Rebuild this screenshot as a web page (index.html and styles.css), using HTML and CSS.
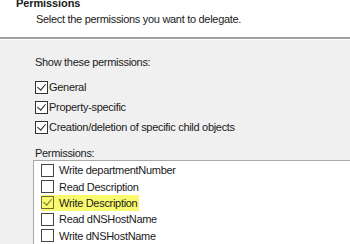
FILE: index.html
```html
<!DOCTYPE html>
<html lang="en">
<head>
    <meta charset="UTF-8">
    <title>Permissions</title>
    <link rel="stylesheet" href="styles.css">
</head>
<body>
    <div class="header">
        <h1>Permissions</h1>
        <p>Select the permissions you want to delegate.</p>
    </div>

    <div class="content">
        <p class="label">Show these permissions:</p>
        <div class="filter">
            <div class="check-row"><span class="box checked"></span>General</div>
            <div class="check-row"><span class="box checked"></span>Property-specific</div>
            <div class="check-row"><span class="box checked"></span>Creation/deletion of specific child objects</div>
        </div>

        <p class="label">Permissions:</p>
        <div class="listbox">
            <div class="item"><span class="box"></span>Write departmentNumber</div>
            <div class="item"><span class="box"></span>Read Description</div>
            <div class="item marked"><span class="box checked"></span>Write Description</div>
            <div class="item"><span class="box"></span>Read dNSHostName</div>
            <div class="item"><span class="box"></span>Write dNSHostName</div>
        </div>
    </div>
</body>
</html>
```

FILE: styles.css
```css
/* Delegation wizard page */
body, h1, p {
    margin: 0;
    padding: 0;
}

body {
    font-family: 'Liberation Sans', Arial, sans-serif;
    font-size: 11px;
    letter-spacing: -0.3px;
    color: #1a1a1a;
    background-color: #f0f0f0;
    width: 350px;
    height: 244px;
    overflow: hidden;
    white-space: nowrap;
}

.header {
    background-color: #ffffff;
    height: 41px;
    border-bottom: 2px solid #a0a0a0;
    box-shadow: 0 1px 0 #ffffff;
}

.header h1 {
    font-size: 11px;
    font-weight: bold;
    letter-spacing: -0.1px;
    line-height: 14px;
    padding-left: 16px;
    margin-top: -4px;
}

.header p {
    padding-left: 36px;
    line-height: 14px;
    margin-top: 2px;
}

.content {
    padding: 16px 0 0 35px;
}

.label {
    line-height: 14px;
}

.filter {
    padding-top: 8px;
    padding-bottom: 9px;
}

.check-row {
    display: flex;
    align-items: center;
    height: 20px;
}

.box {
    width: 11px;
    height: 11px;
    border: 1px solid #333333;
    background-color: #ffffff;
    margin-right: 1px;
    flex-shrink: 0;
    position: relative;
}

.box.checked::after {
    content: "";
    position: absolute;
    left: 3px;
    top: 0px;
    width: 4px;
    height: 7px;
    border: solid #222222;
    border-width: 0 1px 1px 0;
    transform: rotate(40deg);
}

.listbox {
    margin: 0 0 0 -2px;
    background-color: #ffffff;
    border: 1px solid #a9a9a9;
    border-right: none;
    height: 120px;
    padding: 1px 0 0 7px;
}

.item {
    display: flex;
    align-items: center;
    height: 16.4px;
}

.item .box {
    margin-right: 5px;
    border-color: #444444;
}

.item.marked {
    background-color: #fafa6e;
    width: fit-content;
    padding-right: 2px;
}

.item.marked .box {
    background-color: transparent;
    border-color: #6b6b3a;
}

.item.marked .box::after {
    border-color: #6b6b3a;
}
```
